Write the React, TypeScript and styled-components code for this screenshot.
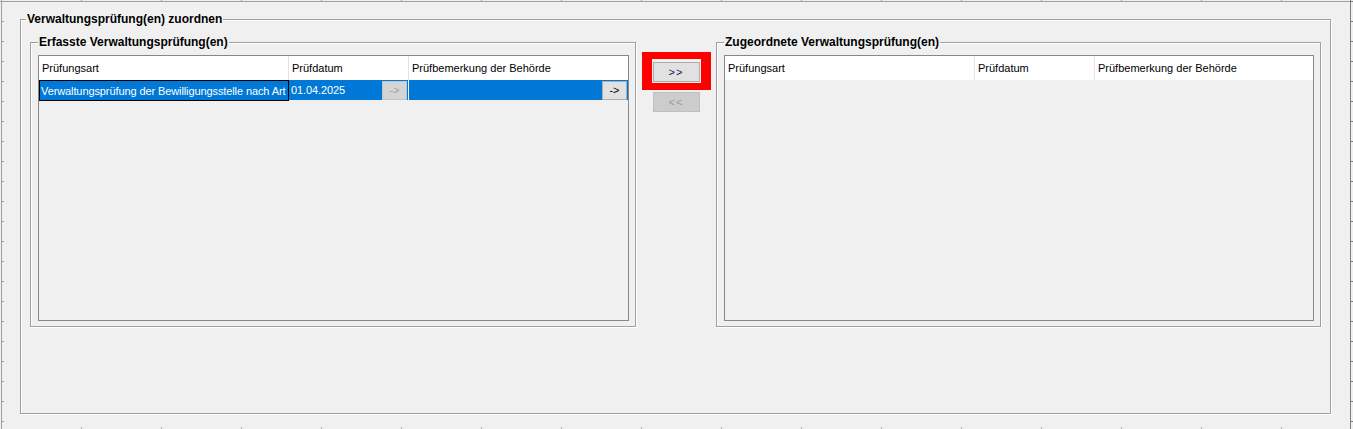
import React from 'react';
import styled, { createGlobalStyle } from 'styled-components';

interface Column {
  key: string;
  title: string;
  width: string;
}

interface PruefungRow {
  id: string;
  art: string;
  datum: string;
  bemerkung: string;
}

const columns: Column[] = [
  { key: 'art', title: 'Prüfungsart', width: '250px' },
  { key: 'datum', title: 'Prüfdatum', width: '120px' },
  { key: 'bemerkung', title: 'Prüfbemerkung der Behörde', width: '1fr' },
];

const erfasst: PruefungRow[] = [
  {
    id: 'vp-1',
    art: 'Verwaltungsprüfung der Bewilligungsstelle nach Art',
    datum: '01.04.2025',
    bemerkung: '',
  },
];

const GlobalStyle = createGlobalStyle`
  html, body {
    margin: 0;
    padding: 0;
    background: #f0f0f0;
  }
  body {
    font-family: 'Liberation Sans', Arial, sans-serif;
    font-size: 11px;
    color: #000;
  }
`;

const Frame = styled.div`
  position: relative;
  width: 1353px;
  height: 429px;
  box-sizing: border-box;
  padding: 12px 0 0 20px;
  background: #f0f0f0;
  overflow: hidden;
`;

const Ruler = styled.svg`
  position: absolute;
  inset: 0;
  pointer-events: none;
`;

const GroupBox = styled.fieldset<{ $width: number; $height: number; $padTop: number }>`
  box-sizing: border-box;
  width: ${(p) => p.$width}px;
  height: ${(p) => p.$height}px;
  margin: 0;
  padding: ${(p) => p.$padTop}px 9px 0 9px;
  border: 1px solid #a0a0a0;
  box-shadow: 1px 1px 0 #ffffff, inset 1px 1px 0 #ffffff;
  min-width: 0;
`;

const Legend = styled.legend<{ $shift: number }>`
  margin-left: ${(p) => p.$shift}px;
  padding: 0 1px;
  font-weight: bold;
  font-size: 12px;
  line-height: 14px;
  color: #000;
`;

const InnerBox = styled(GroupBox)`
  padding: 6px 6px 0 7px;
`;

const Columns = styled.div`
  display: flex;
  align-items: flex-start;
`;

const TransferColumn = styled.div`
  width: 80px;
  padding-top: 17px;
  display: flex;
  flex-direction: column;
  align-items: center;
`;

const Highlight = styled.div`
  border: 7px solid #ff0000;
  border-left-width: 10px;
  border-right-width: 10px;
  padding: 3px 1px 1px;
`;

const TransferButton = styled.button<{ $disabled?: boolean }>`
  box-sizing: border-box;
  width: 47px;
  height: 20px;
  margin: 0;
  padding: 0;
  border: 1px solid ${(p) => (p.$disabled ? '#bfbfbf' : '#adadad')};
  background: ${(p) => (p.$disabled ? '#cccccc' : '#e1e1e1')};
  color: ${(p) => (p.$disabled ? '#9a9a9a' : '#14145a')};
  font-family: 'Liberation Sans', Arial, sans-serif;
  font-size: 11px;
  letter-spacing: 1px;
  cursor: default;
`;

const SecondaryButton = styled(TransferButton)`
  margin-top: 2px;
`;

const Grid = styled.div`
  box-sizing: border-box;
  height: 266px;
  border: 1px solid #828790;
  background: #f0f0f0;
`;

const GridRow = styled.div`
  display: grid;
  grid-template-columns: ${columns.map((c) => c.width).join(' ')};
`;

const HeaderCell = styled.div`
  height: 24px;
  display: flex;
  align-items: center;
  padding-left: 3px;
  background: #ffffff;
  border-right: 1px solid #e5e5e5;
  white-space: nowrap;
  overflow: hidden;

  &:last-child {
    border-right: none;
  }
`;

const Cell = styled.div<{ $focused?: boolean }>`
  box-sizing: border-box;
  height: 21px;
  display: flex;
  align-items: center;
  padding-left: ${(p) => (p.$focused ? 1 : 2)}px;
  background: #0078d7;
  color: #ffffff;
  letter-spacing: -0.1px;
  border: ${(p) => (p.$focused ? '1px solid #000000' : 'none')};
  border-right: ${(p) => (p.$focused ? '1px solid #000000' : '1px solid #f0f0f0')};
  border-bottom: ${(p) => (p.$focused ? '1px solid #000000' : '1px solid #f0f0f0')};
  white-space: nowrap;
  overflow: hidden;

  &:last-child {
    border-right: none;
  }
`;

const CellButton = styled.button<{ $disabled?: boolean }>`
  box-sizing: border-box;
  flex: none;
  width: 25px;
  height: 19px;
  margin: 0 1px 0 auto;
  padding: 0;
  border: 1px solid ${(p) => (p.$disabled ? '#c4c4c4' : '#adadad')};
  background: ${(p) => (p.$disabled ? '#d4d4d4' : '#e1e1e1')};
  color: ${(p) => (p.$disabled ? '#a0a0a0' : '#000000')};
  font-family: 'Liberation Sans', Arial, sans-serif;
  font-size: 11px;
  cursor: default;
`;

const RulerMarks: React.FC = () => {
  const xs = Array.from({ length: 17 }, (_, i) => 81 + i * 80);
  const ys = Array.from({ length: 22 }, (_, i) => 1 + i * 20);
  return (
    <Ruler width={1353} height={429}>
      <line x1={0} y1={1.5} x2={1353} y2={1.5} stroke="#a0a0a0" />
      <line x1={1.5} y1={0} x2={1.5} y2={429} stroke="#a0a0a0" />
      <line x1={1350.5} y1={0} x2={1350.5} y2={429} stroke="#808080" />
      {xs.map((x) => (
        <React.Fragment key={x}>
          <line x1={x + 0.5} y1={0} x2={x + 0.5} y2={1} stroke="#a0a0a0" />
          <line x1={x + 0.5} y1={427} x2={x + 0.5} y2={429} stroke="#b0b0b0" />
        </React.Fragment>
      ))}
      {ys.map((y) => (
        <React.Fragment key={y}>
          <line x1={2} y1={y + 0.5} x2={4} y2={y + 0.5} stroke="#a0a0a0" />
          <line x1={1351} y1={y + 0.5} x2={1353} y2={y + 0.5} stroke="#808080" />
        </React.Fragment>
      ))}
    </Ruler>
  );
};

const PruefungGrid: React.FC<{ rows: PruefungRow[] }> = ({ rows }) => (
  <Grid>
    <GridRow>
      {columns.map((c) => (
        <HeaderCell key={c.key}>{c.title}</HeaderCell>
      ))}
    </GridRow>
    {rows.map((row) => (
      <GridRow key={row.id}>
        <Cell $focused>{row.art}</Cell>
        <Cell>
          {row.datum}
          <CellButton $disabled>-&gt;</CellButton>
        </Cell>
        <Cell>
          {row.bemerkung}
          <CellButton>-&gt;</CellButton>
        </Cell>
      </GridRow>
    ))}
  </Grid>
);

const App: React.FC = () => (
  <>
    <GlobalStyle />
    <Frame>
      <GroupBox $width={1311} $height={402} $padTop={9}>
        <Legend $shift={-4}>Verwaltungsprüfung(en) zuordnen</Legend>
        <Columns>
          <InnerBox $width={606} $height={292} $padTop={6}>
            <Legend $shift={0}>Erfasste Verwaltungsprüfung(en)</Legend>
            <PruefungGrid rows={erfasst} />
          </InnerBox>
          <TransferColumn>
            <Highlight>
              <TransferButton>&gt;&gt;</TransferButton>
            </Highlight>
            <SecondaryButton $disabled>&lt;&lt;</SecondaryButton>
          </TransferColumn>
          <InnerBox $width={605} $height={292} $padTop={6}>
            <Legend $shift={0}>Zugeordnete Verwaltungsprüfung(en)</Legend>
            <PruefungGrid rows={[]} />
          </InnerBox>
        </Columns>
      </GroupBox>
      <RulerMarks />
    </Frame>
  </>
);

export default App;
